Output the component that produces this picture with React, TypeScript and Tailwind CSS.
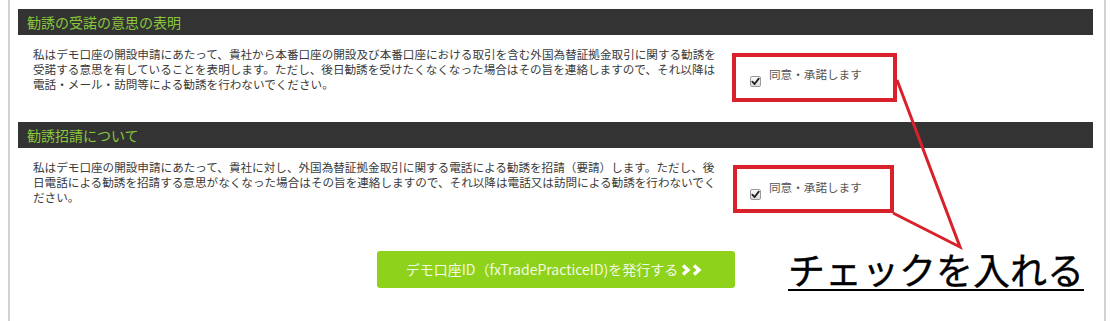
import React from "react";

const jp = { fontFamily: '"Noto Sans CJK JP", "Noto Sans", sans-serif' };

function CheckMark() {
  return (
    <span className="inline-flex h-[11px] w-[11px] items-center justify-center rounded-[2px] border border-[#9a9a9a] bg-gradient-to-b from-[#fdfdfd] to-[#dcdcdc]">
      <svg width="9" height="9" viewBox="0 0 10 10">
        <path d="M1.5 5.2 L4 7.8 L8.6 1.8" fill="none" stroke="#222" strokeWidth="2" strokeLinecap="round" strokeLinejoin="round" />
      </svg>
    </span>
  );
}

function Agree({ top }: { top: string }) {
  return (
    <label className={`ml-[17px] flex items-center gap-[8px] ${top}`}>
      <span className="mt-[10px]"><CheckMark /></span>
      <span className="text-[11.6px] leading-[15px] text-[#555]">同意・承諾します</span>
    </label>
  );
}

function Section({ title, lines, agreeTop, rowHeight }: { title: string; lines: string[]; agreeTop: string; rowHeight: string }) {
  return (
    <section>
      <h2 className="h-[26px] bg-[#333333] pl-[9px] text-[14px] leading-[26px] font-normal text-[#88c83a]">{title}</h2>
      <div className={`flex ${rowHeight}`}>
        <p className="ml-[15px] mt-[12px] w-[700px] whitespace-nowrap text-[11.6px] leading-[15px] text-[#3a3a3a]">
          {lines.map((l, i) => (
            <React.Fragment key={i}>
              {l}
              {i < lines.length - 1 && <br />}
            </React.Fragment>
          ))}
        </p>
        <Agree top={agreeTop} />
      </div>
    </section>
  );
}

export default function App() {
  return (
    <div className="relative h-[321px] w-[1120px] overflow-hidden bg-white" style={jp}>
      <div className="ml-[8px] h-[321px] w-[1098px] border-x-2 border-[#d2d2d2] pl-[8px] pr-[11px] pt-[9px]">
        <Section
          title="勧誘の受諾の意思の表明"
          lines={[
            "私はデモ口座の開設申請にあたって、貴社から本番口座の開設及び本番口座における取引を含む外国為替証拠金取引に関する勧誘を",
            "受諾する意思を有していることを表明します。ただし、後日勧誘を受けたくなくなった場合はその旨を連絡しますので、それ以降は",
            "電話・メール・訪問等による勧誘を行わないでください。",
          ]}
          agreeTop="mt-[22px] self-start"
          rowHeight="h-[87px]"
        />
        <Section
          title="勧誘招請について"
          lines={[
            "私はデモ口座の開設申請にあたって、貴社に対し、外国為替証拠金取引に関する電話による勧誘を招請（要請）します。ただし、後",
            "日電話による勧誘を招請する意思がなくなった場合はその旨を連絡しますので、それ以降は電話又は訪問による勧誘を行わないでく",
            "ださい。",
          ]}
          agreeTop="mt-[22px] self-start"
          rowHeight="h-[103px]"
        />
        <div className="flex justify-center">
          <button className="flex h-[37px] w-[358px] items-center justify-center gap-[3px] rounded-[3px] bg-[#8ed21b] text-[14px] text-[#f2f9e4]">
            <span>デモ口座ID（fxTradePracticeID)を発行する</span>
            <svg width="24" height="12" viewBox="0 0 24 12">
              <path d="M2 1.5 L7 6 L2 10.5" fill="none" stroke="#ffffff" strokeWidth="3.4" strokeLinejoin="miter" />
              <path d="M13 1.5 L18 6 L13 10.5" fill="none" stroke="#ffffff" strokeWidth="3.4" strokeLinejoin="miter" />
            </svg>
          </button>
        </div>
      </div>

      <svg className="pointer-events-none absolute left-0 top-0" width="1120" height="321">
        <rect x="734" y="55" width="161" height="45" fill="none" stroke="#d8212b" strokeWidth="4" />
        <rect x="735" y="167" width="157" height="44" fill="none" stroke="#d8212b" strokeWidth="4" />
        <polyline points="897,80 960,247 893,213" fill="none" stroke="#d8212b" strokeWidth="3" strokeLinejoin="miter" />
      </svg>

      <div className="absolute left-[788px] top-[246px] text-[37px] font-normal leading-[46px] text-black underline decoration-[2px] underline-offset-[4px] [-webkit-text-stroke:0.35px_black]">
        チェックを入れる
      </div>
    </div>
  );
}
